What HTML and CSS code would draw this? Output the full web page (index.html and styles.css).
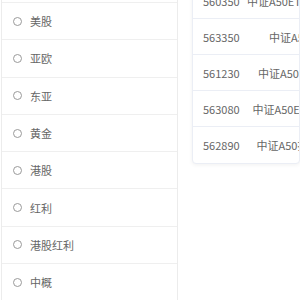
FILE: index.html
```html
<!DOCTYPE html>
<html lang="zh-CN">
<head>
    <meta charset="UTF-8">
    <meta name="viewport" content="width=device-width, initial-scale=1.0">
    <title>指数分类</title>
    <link rel="stylesheet" href="styles.css">
</head>
<body>
    <div class="page">
        <ul class="category-list">
            <li class="category"><span class="radio"></span>A股</li>
            <li class="category"><span class="radio"></span>美股</li>
            <li class="category"><span class="radio"></span>亚欧</li>
            <li class="category"><span class="radio"></span>东亚</li>
            <li class="category"><span class="radio"></span>黄金</li>
            <li class="category"><span class="radio"></span>港股</li>
            <li class="category"><span class="radio"></span>红利</li>
            <li class="category"><span class="radio"></span>港股红利</li>
            <li class="category"><span class="radio"></span>中概</li>
            <li class="category"><span class="radio"></span>债券</li>
        </ul>

        <div class="fund-table">
            <div class="fund-row">
                <span class="code">560350</span>
                <span class="name">中证A50ETF华宝基金</span>
            </div>
            <div class="fund-row">
                <span class="code">563350</span>
                <span class="name">中证A50ETF</span>
            </div>
            <div class="fund-row">
                <span class="code">561230</span>
                <span class="name">中证A50ETF基金</span>
            </div>
            <div class="fund-row">
                <span class="code">563080</span>
                <span class="name">中证A50ETF易方达</span>
            </div>
            <div class="fund-row">
                <span class="code">562890</span>
                <span class="name">中证A50指数基金</span>
            </div>
        </div>
    </div>
</body>
</html>
```

FILE: styles.css
```css
body {
    margin: 0;
    background-color: white;
    font-family: "Noto Sans CJK SC", "Noto Sans", sans-serif;
    font-size: 11px;
    color: #666;
}
.page {
    display: flex;
    align-items: flex-start;
    gap: 14px;
}
.category-list {
    list-style: none;
    margin: -34.3px 0 0 1px;
    padding: 0;
    width: 177px;
    box-sizing: border-box;
    border-left: 1px solid #ececec;
    border-right: 1px solid #ececec;
}
.category {
    display: flex;
    align-items: center;
    height: 37.3px;
    box-sizing: border-box;
    padding-left: 11px;
    border-bottom: 1px solid #efefef;
}
.radio {
    width: 9px;
    height: 9px;
    box-sizing: border-box;
    border: 1px solid #9a9a9a;
    border-radius: 50%;
    margin-right: 8px;
}
.fund-table {
    margin-top: -18px;
    width: 106px;
    overflow: hidden;
    border: 1px solid #ebeef5;
    border-radius: 4px;
    box-shadow: 0 1px 4px rgba(0,0,0,0.06);
    background-color: white;
}
.fund-row {
    display: flex;
    align-items: center;
    height: 36px;
    box-sizing: border-box;
    border-bottom: 1px solid #ebeef5;
    white-space: nowrap;
}
.fund-row:last-child {
    border-bottom: none;
}
.code {
    flex: none;
    width: 46px;
    padding-left: 10px;
    box-sizing: border-box;
}
.name {
    flex: none;
    width: 120px;
    text-align: center;
}
```
